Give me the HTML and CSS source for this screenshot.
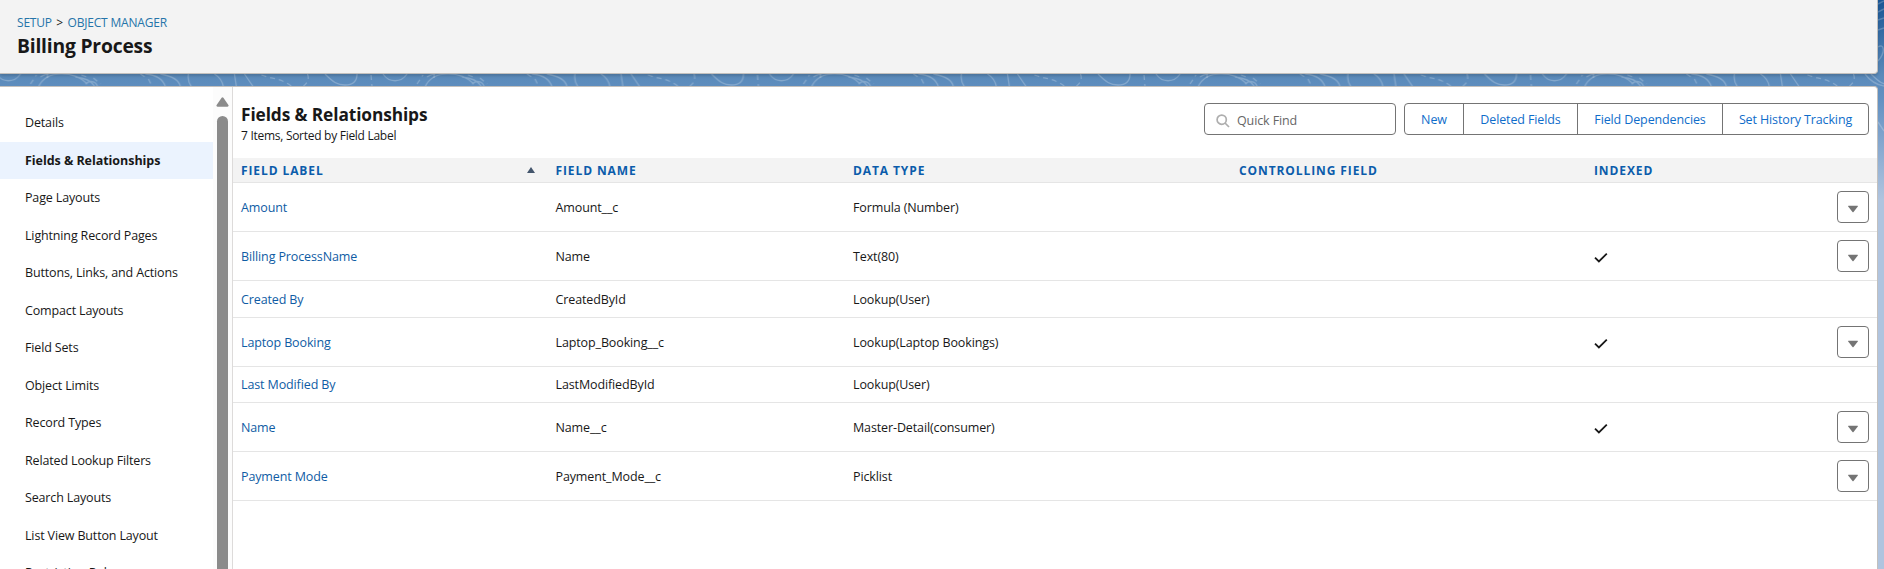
FILE: index.html
```
<!DOCTYPE html>
<html lang="en">
<head>
<meta charset="utf-8">
<title>Billing Process</title>
<link rel="stylesheet" href="styles.css">
</head>
<body>
<svg class="defs" width="0" height="0" aria-hidden="true">
  <symbol id="check" viewBox="0 0 14 12"><path d="M1 5.600 4.900 9.400 12.800 1.700" fill="none" stroke="#181818" stroke-width="1.800"/></symbol>
  <symbol id="down" viewBox="0 0 10 8"><path d="M.4 .8h9.200q.5.200.2.700L5.500 6.900q-.5.500-1 0L.2 1.500Q-.1 1 .4.800z" fill="#747474"/></symbol>
</svg>
<svg class="backdrop" aria-hidden="true">
  <defs>
    <pattern id="contours" x="318" y="0" width="386.500" height="87" patternUnits="userSpaceOnUse">
      <g fill="none" stroke="#fff" stroke-opacity=".24" stroke-width="1.300">
        <path d="M7 74c8 8 12 11 20 11 9 0 12-5 12-11M65 74c6 9 18 9 24 0M107 87c8-18 36-16 49-3M109 77c6-4 14-4 20-3M144 77c10 1 16 4 19 9M154 84c4-4 10-3 12 2"/>
        <path d="M99 84l6-9M150 75l8 3M162 78l7 6M209 74l6 4M217 79l4 8M53 75l1 12M116 74v4" stroke-dasharray="5 4"/>
        <path d="M214 74c11 1 18 6 20 13M229 74c11 2 19 6 20 13M257 74c-1 6 0 9 3 13M283 74c5 3 8 7 9 13M303 74l2 13M313 74l9 13"/>
        <path d="M330 75c10 4 20 3 31 12M376 74c2 5 0 9-4 12" stroke-dasharray="5 4"/>
      </g>
    </pattern>
  </defs>
  <rect y="70" width="100%" height="17" fill="url(#contours)"/>
  <g fill="none" stroke="#fff" stroke-opacity=".22" stroke-width="1.400">
    <path d="M1878 4l6-3M1878 12l6-3M1878 20l6-2M1878 30l6-2M1878 47c6-4 8 5 0 14M1865 74c6 8 12 11 19 12M1878 122l6 9"/>
  </g>
</svg>
<header class="page-header">
  <nav class="crumbs"><a>SETUP</a><span class="sep">&gt;</span><a>OBJECT MANAGER</a></nav>
  <h1>Billing Process</h1>
</header>
<main class="panel">
  <aside class="sidebar">
    <ul class="side-list">
      <li>Details</li>
      <li class="active">Fields &amp; Relationships</li>
      <li>Page Layouts</li>
      <li>Lightning Record Pages</li>
      <li>Buttons, Links, and Actions</li>
      <li>Compact Layouts</li>
      <li>Field Sets</li>
      <li>Object Limits</li>
      <li>Record Types</li>
      <li>Related Lookup Filters</li>
      <li>Search Layouts</li>
      <li>List View Button Layout</li>
      <li>Restriction Rules</li>
    </ul>
    <div class="scrollbar">
      <svg width="13" height="10" viewBox="0 0 13 10"><path d="M5.600.8q.9-1.200 1.800 0l5 7.200q.7 1.600-.9 1.700h-10Q-.1 9.600.6 8z" fill="#8b8b8b"/></svg>
      <div class="thumb"></div>
    </div>
  </aside>
  <section class="content">
    <div class="toolbar">
      <div class="heading"><h2>Fields &amp; Relationships</h2><p>7 Items, Sorted by Field Label</p></div>
      <label class="search">
        <svg width="14" height="14" viewBox="0 0 14 14" fill="none" stroke="#aeaeae" stroke-width="1.700"><circle cx="5.700" cy="5.700" r="4.600"/><path d="m9 9 4 4"/></svg>
        <span>Quick Find</span>
      </label>
      <div class="buttons"><button class="b1">New</button><button class="b2">Deleted Fields</button><button class="b3">Field Dependencies</button><button class="b4">Set History Tracking</button></div>
    </div>
    <div class="table">
      <div class="row head"><span class="sorted">FIELD LABEL<svg class="sort" width="8" height="6" viewBox="0 0 8 6"><path d="M4 0 8 6H0z" fill="#44566c"/></svg></span><span>FIELD NAME</span><span>DATA TYPE</span><span>CONTROLLING FIELD</span><span>INDEXED</span><span></span></div>
      <div class="row"><a>Amount</a><span>Amount__c</span><span>Formula (Number)</span><span></span><span></span><button class="more"><svg><use href="#down"/></svg></button></div>
      <div class="row"><a>Billing ProcessName</a><span>Name</span><span>Text(80)</span><span></span><span><svg class="check"><use href="#check"/></svg></span><button class="more"><svg><use href="#down"/></svg></button></div>
      <div class="row short"><a>Created By</a><span>CreatedById</span><span>Lookup(User)</span></div>
      <div class="row"><a>Laptop Booking</a><span>Laptop_Booking__c</span><span>Lookup(Laptop Bookings)</span><span></span><span><svg class="check"><use href="#check"/></svg></span><button class="more"><svg><use href="#down"/></svg></button></div>
      <div class="row short last-mod"><a>Last Modified By</a><span>LastModifiedById</span><span>Lookup(User)</span></div>
      <div class="row"><a>Name</a><span>Name__c</span><span>Master-Detail(consumer)</span><span></span><span><svg class="check"><use href="#check"/></svg></span><button class="more"><svg><use href="#down"/></svg></button></div>
      <div class="row"><a>Payment Mode</a><span>Payment_Mode__c</span><span>Picklist</span><span></span><span></span><button class="more"><svg><use href="#down"/></svg></button></div>
    </div>
  </section>
</main>
</body>
</html>
```
FILE: styles.css
```
* { box-sizing: border-box; }
body {
  margin: 0; height: 569px; overflow: hidden; position: relative;
  display: flex; flex-direction: column; gap: 12px;
  font: 12.5px/19px "Segoe UI", "Open Sans", sans-serif; color: #181818; letter-spacing: -.12px;
  background: linear-gradient(#195594 0, #5a8aba 75px, #6391c2 100px, #b0c4df 200px);
}
h1, h2, p, ul { margin: 0; padding: 0; }
.defs { position: absolute; }
.backdrop { position: absolute; left: 0; top: 0; width: 100%; height: 140px; }
.page-header {
  position: relative; width: 1878px; height: 74px; flex: none; padding: 13px 17px;
  background: #f3f3f3; border: 1px solid #c3c0bd; border-width: 0 1px 1px 0;
  border-radius: 0 0 4px 0; box-shadow: 0 2px 3px rgba(0,0,0,.16);
}
.crumbs { display: flex; line-height: 19px; font-size: 12px; }
.crumbs a { color: #2574a9; letter-spacing: -.2px; }
.crumbs .sep { margin: 0 4.500px; }
h1 { font-size: 19.300px; line-height: 28px; font-weight: 700; letter-spacing: -.2px; }
.panel {
  position: relative; width: 1878px; flex: 1; min-height: 0; display: flex;
  background: #fff; border: 1px solid #c3c0bd; border-width: 1px 1px 0 0; border-radius: 0 4px 0 0;
}
.sidebar { width: 232px; flex: none; display: flex; overflow: hidden; }
.side-list { width: 213px; flex: none; list-style: none; padding-top: 17px; }
.side-list li { height: 37.500px; padding: 9px 25px; line-height: 19px; white-space: nowrap; letter-spacing: -.15px; }
.side-list .active { background: #ebf3fe; font-weight: 700; letter-spacing: -.05px; }
.scrollbar { width: 19px; background: #fcfcfc; padding: 10px 0 0 3px; display: flex; flex-direction: column; gap: 9px; }
.thumb { width: 11px; margin-left: 1px; flex: 1; background: #8b8b8b; border-radius: 6px 6px 0 0; }
.content { flex: 1; border-left: 1px solid #dddbda; min-width: 0; }
.toolbar { display: flex; height: 71px; padding: 16px 8px 0; }
.heading { flex: 1; }
h2 { font-size: 17.300px; line-height: 24px; font-weight: 700; letter-spacing: -.1px; }
.heading p { font-size: 12px; line-height: 18px; letter-spacing: -.28px; }
.search {
  width: 192px; height: 32px; border: 1px solid #747474; border-radius: 4px; margin-right: 8px;
  display: flex; align-items: center; gap: 7px; padding: 3px 0 0 11px; color: #666;
}
.buttons { display: flex; height: 32px; border: 1px solid #747474; border-radius: 4px; }
.buttons button { font: inherit; letter-spacing: inherit; color: #0f6dca; background: none; border: 0; padding: 0; white-space: nowrap; }
.buttons button + button { border-left: 1px solid #747474; }
.b1 { width: 58px; } .b2 { width: 114px; } .b3 { width: 145px; } .b4 { width: 146px; }
.row {
  height: 49px; padding: 0 8px; border-bottom: 1px solid #e5e5e5;
  display: grid; grid-template-columns: 314.500px 297.500px 386px 355px 1fr auto; align-items: center;
}
.row a { color: #0f5ca4; }
.row.short { height: 37px; } .row.last-mod { height: 36px; }
.row.head { height: 25px; background: #f3f3f3; color: #0b5cab; font-size: 12px; font-weight: 700; letter-spacing: .9px; }
.sorted { display: flex; align-items: center; justify-content: space-between; padding-right: 21px; }
.check { width: 14px; height: 12px; display: block; margin-top: 3px; }
.more { width: 32px; height: 32px; padding: 3px 0 0; border: 1px solid #747474; border-radius: 4px; background: #fff; display: flex; align-items: center; justify-content: center; }
.more svg { width: 10px; height: 8px; }
```
